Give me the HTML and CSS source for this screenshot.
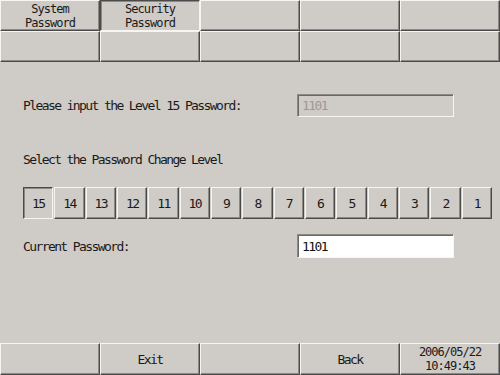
FILE: index.html
```html
<!DOCTYPE html>
<html lang="en">
  <head>
    <meta charset="UTF-8" />
    <meta name="viewport" content="width=device-width, initial-scale=1.0" />
    <title>Security Password</title>
    <link rel="stylesheet" href="styles.css">
  </head>
  <body>
    <div class="tabs">
      <button class="key two">System<br>Password</button>
      <button class="key two pressed">Security<br>Password</button>
      <button class="key"></button>
      <button class="key"></button>
      <button class="key"></button>
      <button class="key"></button>
      <button class="key"></button>
      <button class="key"></button>
      <button class="key"></button>
      <button class="key"></button>
    </div>

    <div class="panel">
      <div class="row first-row">
        <span class="label">Please input the Level 15 Password:</span>
        <input class="field" type="text" value="1101" disabled>
      </div>

      <div class="caption">Select the Password Change Level</div>

      <div class="levels" id="levels"></div>

      <div class="row current-row">
        <span class="label">Current Password:</span>
        <input class="field white" type="text" value="1101">
      </div>
    </div>

    <div class="footer">
      <button class="key"></button>
      <button class="key">Exit</button>
      <button class="key"></button>
      <button class="key">Back</button>
      <button class="key two">2006/05/22<br>10:49:43</button>
    </div>

    <script>
      const levels = document.getElementById("levels");
      for (let level = 15; level >= 1; level--) {
        const btn = document.createElement("button");
        btn.className = "key level";
        btn.textContent = level;
        if (level === 15) btn.classList.add("pressed");
        btn.addEventListener("click", () => {
          levels.querySelectorAll(".pressed").forEach((b) => b.classList.remove("pressed"));
          btn.classList.add("pressed");
        });
        levels.appendChild(btn);
      }
    </script>
  </body>
</html>
```

FILE: styles.css
```css
body {
  margin: 0;
  width: 500px;
  height: 375px;
  overflow: hidden;
  display: flex;
  flex-direction: column;
  background-color: #cfcbc6;
  font-family: "DejaVu Sans Mono", monospace;
  font-size: 13px;
  letter-spacing: -1.6px;
  color: #1a1a1a;
}

.key {
  margin: 0;
  padding: 0;
  font: inherit;
  letter-spacing: inherit;
  color: inherit;
  line-height: 13px;
  background-color: #cfcbc6;
  border: 1px solid;
  border-color: #f7f5f2 #4a4a4a #4a4a4a #f7f5f2;
  box-shadow: inset -1px -1px 0 #8c8985;
  cursor: pointer;
}

.key.two {
  font-size: 12px;
  letter-spacing: -1px;
  line-height: 14px;
}

.key.pressed {
  border-color: #4a4a4a #f7f5f2 #f7f5f2 #4a4a4a;
  box-shadow: inset 1px 1px 0 #8c8985;
}

.tabs {
  display: grid;
  grid-template-columns: repeat(5, 100px);
  grid-template-rows: 31px 31px;
}

.panel {
  padding-left: 23px;
}

.row {
  display: flex;
  align-items: center;
}

.label {
  width: 274px;
}

.first-row {
  margin-top: 32px;
}

.field {
  box-sizing: border-box;
  width: 157px;
  height: 23px;
  margin: 0;
  padding: 0 0 0 4px;
  font: inherit;
  letter-spacing: inherit;
  color: #9d9995;
  -webkit-text-fill-color: #9d9995;
  opacity: 1;
  background-color: #cfcbc6;
  border: 1px solid;
  border-color: #8c8985 #f7f5f2 #f7f5f2 #8c8985;
  box-shadow: inset 1px 1px 0 #6a6764;
  outline: none;
}

.field.white {
  height: 24px;
  background-color: #ffffff;
  color: #111;
  -webkit-text-fill-color: #111;
}

.caption {
  margin-top: 36px;
  line-height: 14px;
}

.levels {
  display: grid;
  grid-template-columns: repeat(15, 1fr);
  column-gap: 1px;
  width: 469px;
  height: 32px;
  margin-top: 20px;
}

.current-row {
  margin-top: 15px;
}

.footer {
  margin-top: auto;
  display: grid;
  grid-template-columns: repeat(5, 100px);
  height: 32px;
}
```
